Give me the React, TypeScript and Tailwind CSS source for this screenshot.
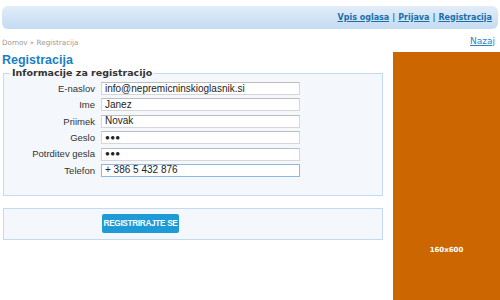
export default function App() {
  const fields = [
    { label: "E-naslov", value: "info@nepremicninskioglasnik.si", type: "text" },
    { label: "Ime", value: "Janez", type: "text" },
    { label: "Priimek", value: "Novak", type: "text" },
    { label: "Geslo", value: "abc", type: "password" },
    { label: "Potrditev gesla", value: "abc", type: "password" },
    { label: "Telefon", value: "+ 386 5 432 876", type: "text" },
  ];

  return (
    <div className="w-[500px] h-[300px] overflow-hidden bg-white font-['Liberation_Sans',Arial,sans-serif]">
      {/* top bar */}
      <div className="mx-[2px] mt-[6px] h-[23px] rounded-[6px] bg-gradient-to-b from-[#e2edf9] to-[#c4dbf2] flex items-center justify-end pr-[6px]">
        <div className="text-[8px] font-bold text-[#1b6fa8] font-['DejaVu_Sans',Verdana,sans-serif] leading-none">
          <a className="underline">Vpis oglasa</a>
          <span className="mx-[3px]">|</span>
          <a className="underline">Prijava</a>
          <span className="mx-[3px]">|</span>
          <a className="underline">Registracija</a>
        </div>
      </div>

      {/* breadcrumb */}
      <div className="flex items-center justify-between px-[2px] mt-[5px] h-[14px]">
        <div className="text-[7.2px] text-[#9a9a9a] font-['DejaVu_Sans',Verdana,sans-serif] leading-none pt-[3px]">
          Domov » Registracija
        </div>
        <a className="text-[9px] text-[#2a86c4] underline font-['DejaVu_Sans',Verdana,sans-serif] mr-[3px] leading-none">Nazaj</a>
      </div>

      <div className="flex mt-[4px]">
        <div className="w-[383px] pl-[3px]">
          <h1 className="text-[12.5px] font-bold text-[#1a7fc0] leading-[14px] -ml-[1px] mt-[1px]">Registracija</h1>

          <fieldset className="mt-[1px] border border-[#c3daf0] bg-[#f4f7fb] pl-[6px] pr-0 pt-0 pb-[18px]">
            <legend className="px-[2px] text-[9.5px] font-bold text-[#333] font-['DejaVu_Sans',Verdana,sans-serif] leading-[10px]">
              Informacije za registracijo
            </legend>
            <div className="flex flex-col gap-[3.4px] mt-[4px]">
              {fields.map((f) => (
                <div key={f.label} className="flex items-center h-[13px]">
                  <label className="w-[91px] text-right text-[9.5px] leading-none text-[#333] pr-[6px]">{f.label}</label>
                  <div
                    className={
                      f.label === "Telefon"
                        ? "w-[199px] h-[13px] bg-white border border-[#8fb8e0] flex items-center pl-[3px]"
                        : "w-[199px] h-[13px] bg-white border border-[#d6d6d6] border-t-[#bdbdbd] flex items-center pl-[3px]"
                    }
                  >
                    {f.type === "password" ? (
                      <span className="text-[8px] text-[#222] tracking-[0.3px] leading-none">●●●</span>
                    ) : (
                      <span className="text-[10px] text-[#222] leading-none">{f.value}</span>
                    )}
                  </div>
                </div>
              ))}
            </div>
          </fieldset>

          <div className="mt-[12px] h-[32px] border border-[#c3daf0] bg-[#f4f7fb] flex items-center pl-[98px]">
            <button className="w-[77px] h-[19px] rounded-[2px] bg-[#1e9bd7] text-white text-[8.2px] font-bold tracking-[-0.3px] leading-none">
              REGISTRIRAJTE SE
            </button>
          </div>
        </div>

        <div className="ml-[10px] w-[107px] h-[260px] bg-[#cc6600] flex flex-col">
          <div className="h-[195px]" />
          <div className="text-center text-white text-[7px] font-bold font-['DejaVu_Sans',Verdana,sans-serif] leading-none">160x600</div>
        </div>
      </div>
    </div>
  );
}
